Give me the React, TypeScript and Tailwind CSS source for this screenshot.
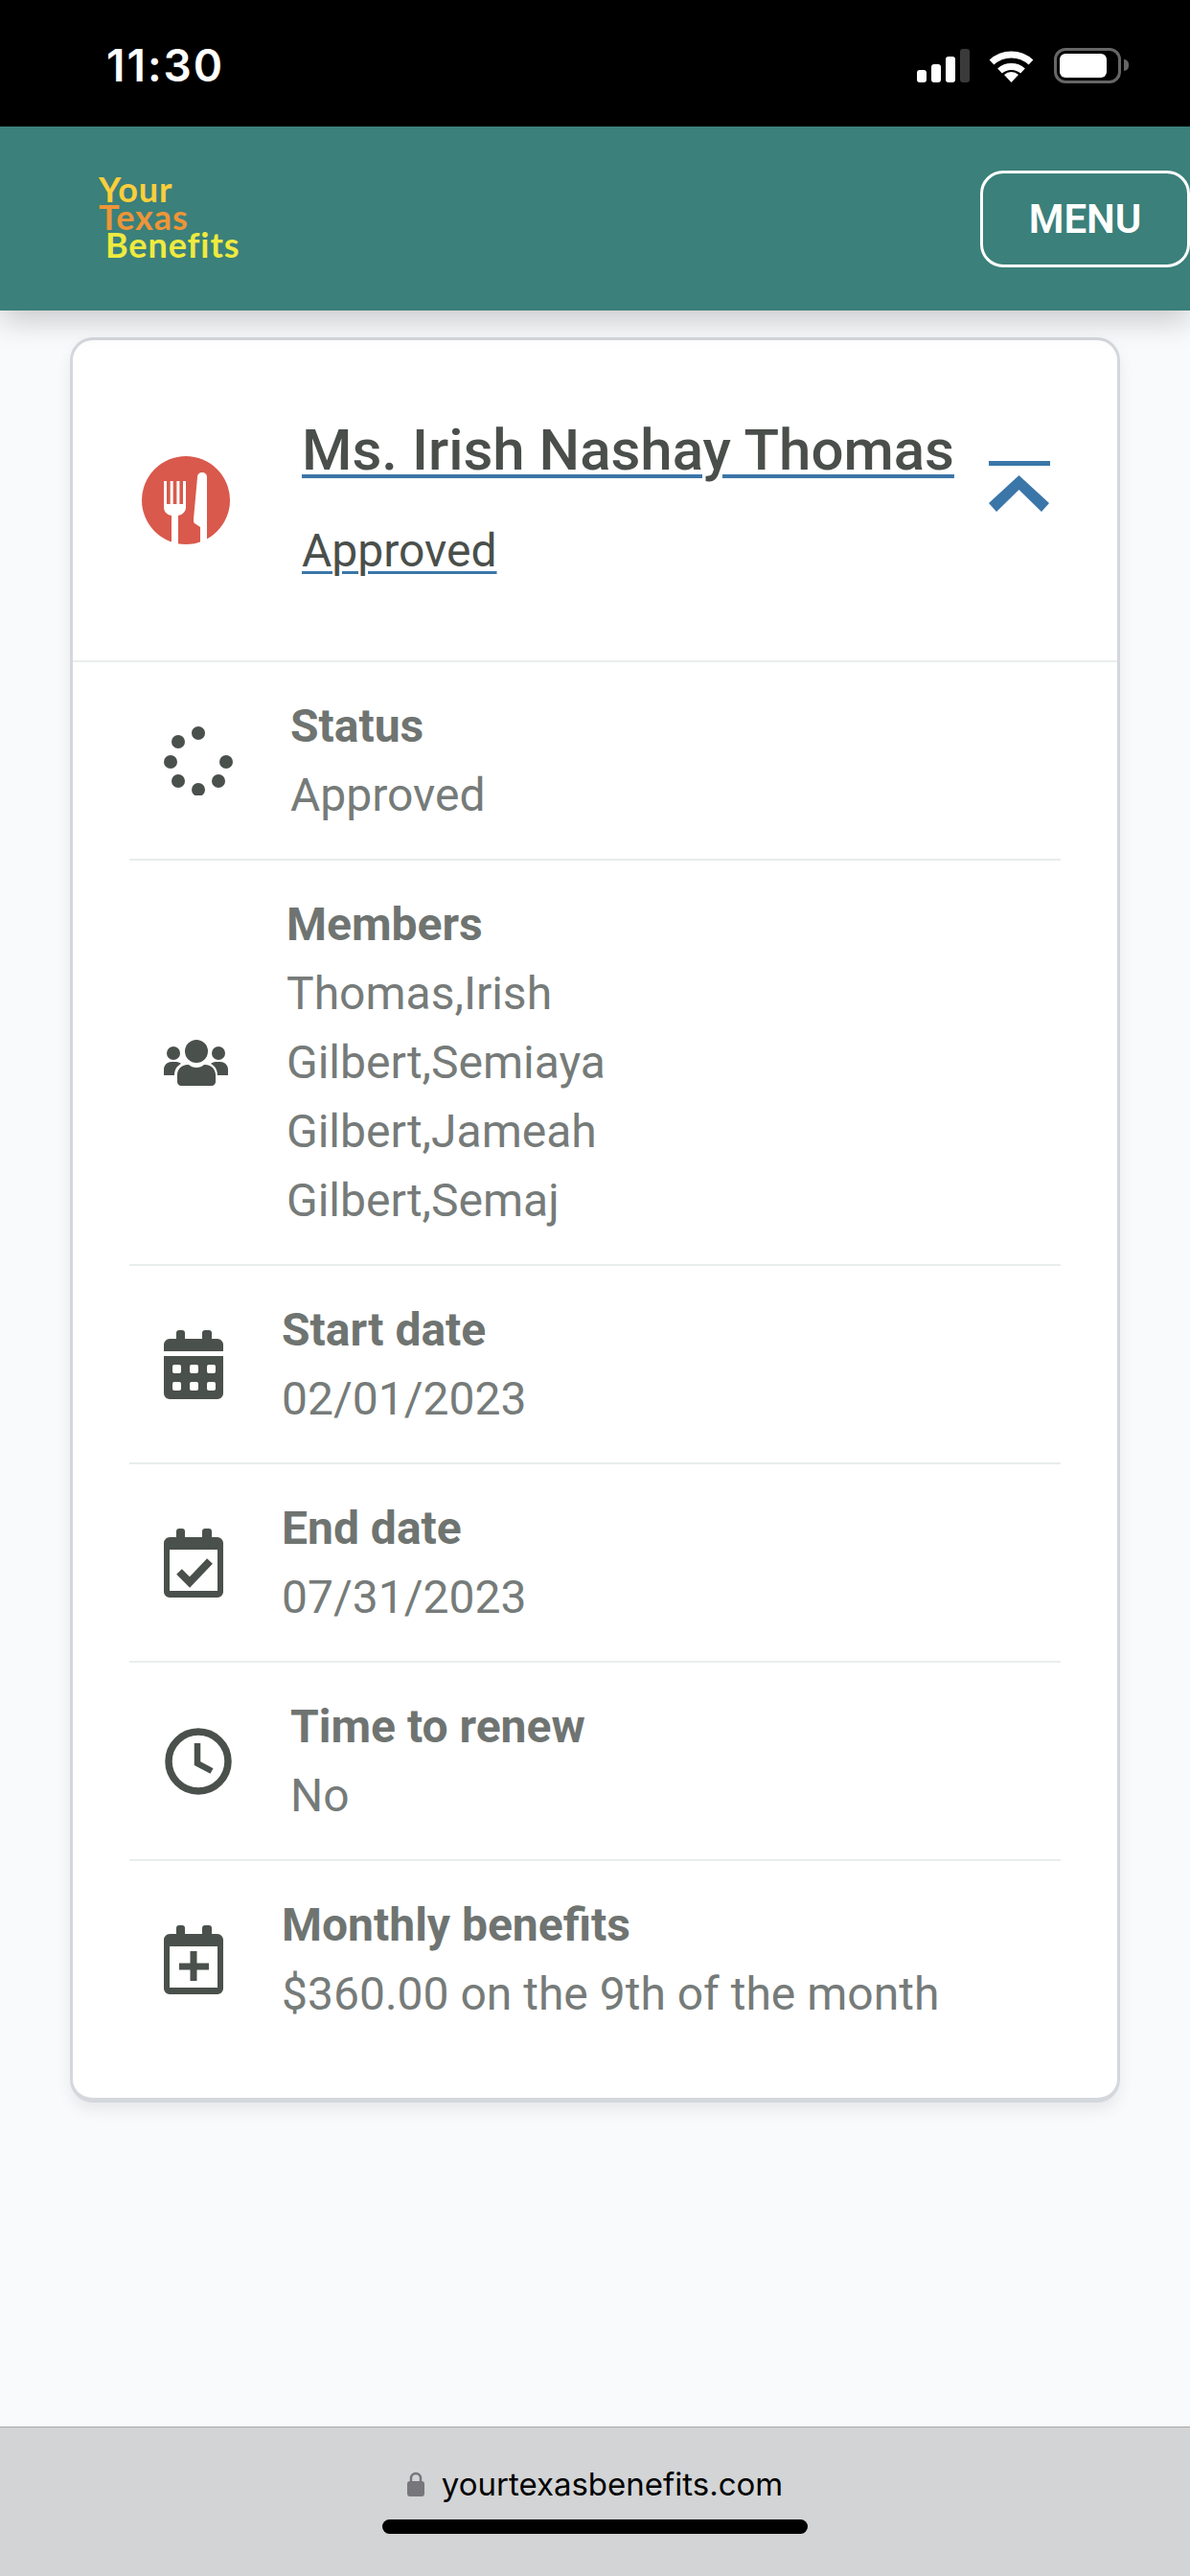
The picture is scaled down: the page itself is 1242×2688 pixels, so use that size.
import React from 'react'

const ICON = '#4a504b'

function StatusIcon() {
  const dots = [
    [36, 7],
    [15, 16],
    [7, 37],
    [15, 57],
    [36, 66],
    [57, 57],
    [65, 37],
  ]
  return (
    <svg width="72" height="72" viewBox="0 0 72 72" className="shrink-0">
      {dots.map(([cx, cy]) => (
        <circle key={`${cx}-${cy}`} cx={cx} cy={cy} r="7" fill={ICON} />
      ))}
    </svg>
  )
}

function MembersIcon() {
  return (
    <svg width="68" height="48" viewBox="0 0 68 48" className="shrink-0">
      <circle cx="34" cy="12" r="12" fill={ICON} />
      <circle cx="10" cy="14" r="7" fill={ICON} />
      <circle cx="57" cy="14" r="7" fill={ICON} />
      <path d="M0 37V31c0-4 3-8 8-8h5c2 0 4 1 5 2-4 2-7 6-7 12z" fill={ICON} />
      <path d="M67 37V31c0-4-3-8-8-8h-5c-2 0-4 1-5 2 4 2 7 6 7 12z" fill={ICON} />
      <path d="M14 44V37c0-6 4-11 11-11h1c2 2 5 3 8 3s6-1 8-3h1c7 0 11 5 11 11v7c0 2-2 4-4 4H18c-2 0-4-2-4-4z" fill={ICON} />
    </svg>
  )
}

function CalendarPegs() {
  return (
    <>
      <rect x="13" y="0" width="9" height="16" rx="3" fill={ICON} />
      <rect x="40" y="0" width="10" height="16" rx="3" fill={ICON} />
    </>
  )
}

function CalendarIcon() {
  const xs = [9, 27, 45]
  const ys = [36, 54]
  return (
    <svg width="63" height="72" viewBox="0 0 63 72" className="shrink-0">
      <CalendarPegs />
      <path d="M0 22V15c0-3 3-6 6-6h50c3 0 6 3 6 6v7z" fill={ICON} />
      <path d="M0 27h62v39c0 3-3 6-6 6H6c-3 0-6-3-6-6z" fill={ICON} />
      {ys.map(y =>
        xs.map(x => <rect key={`${x}-${y}`} x={x} y={y} width="9" height="9" rx="2" fill="#fff" />),
      )}
    </svg>
  )
}

function CalendarFrame({ children }: { children: React.ReactNode }) {
  return (
    <svg width="63" height="72" viewBox="0 0 63 72" className="shrink-0">
      <CalendarPegs />
      <path
        fillRule="evenodd"
        d="M6 9h50c3 0 6 3 6 6v51c0 3-3 6-6 6H6c-3 0-6-3-6-6V15c0-3 3-6 6-6zM6 22v43h50V22z"
        fill={ICON}
      />
      {children}
    </svg>
  )
}

function ClockIcon() {
  return (
    <svg width="72" height="72" viewBox="0 0 72 72" className="shrink-0">
      <circle cx="36" cy="36" r="31" fill="none" stroke={ICON} strokeWidth="7.5" />
      <path d="M35 17v21l15 8" fill="none" stroke={ICON} strokeWidth="6.5" />
    </svg>
  )
}

function MealIcon() {
  return (
    <svg width="92" height="92" viewBox="0 0 92 92" className="shrink-0">
      <circle cx="46" cy="46" r="46" fill="#d9594c" />
      <path
        d="M23 26h3v24h3.7V26h3v24h3.7V26h3v24h3.6V26h3v27c0 5-3.500 8-8 9v30h-7V62c-5-1-8-4-8-9z"
        fill="#fff"
      />
      <path d="M63 17c3 0 5 2 5 5v70h-7V74l-6-4c-1-1-1-2-1-4l4-44c0-3 2-5 5-5z" fill="#fff" />
    </svg>
  )
}

function Row({
  icon,
  label,
  values,
  last,
}: {
  icon: React.ReactNode
  label: string
  values: string[]
  last?: boolean
}) {
  return (
    <div className={`flex items-center pl-[36px] pt-[31px] pb-[30px] ${last ? '' : 'border-b-2 border-[#e8eeec]'}`}>
      {icon}
      <div className="ml-[60px] text-[48px] leading-[72px] text-[#767b79]">
        <div className="font-bold text-[#6f7471]">{label}</div>
        {values.map(v => (
          <div key={v}>{v}</div>
        ))}
      </div>
    </div>
  )
}

export default function App() {
  return (
    <div className="flex min-h-[2688px] w-[1242px] flex-col overflow-hidden bg-[#f9fafc] font-['Roboto',sans-serif]">
      <div className="flex h-[132px] items-center justify-between bg-black pt-[4px] pl-[111px] pr-[64px]">
        <span className="font-['Inter',sans-serif] text-[46px] font-semibold leading-none tracking-[2px] text-white">11:30</span>
        <div className="flex items-center">
          <svg width="55" height="35" viewBox="0 0 55 35">
            <rect x="0" y="22" width="10" height="13" rx="3" fill="#fff" />
            <rect x="15" y="16" width="10" height="19" rx="3" fill="#fff" />
            <rect x="30" y="8" width="10" height="27" rx="3" fill="#fff" />
            <rect x="45" y="0" width="10" height="35" rx="3" fill="#3a3a3a" />
          </svg>
          <svg width="47" height="35" viewBox="0 0 47 35" className="ml-[20px]">
            <path d="M3 14A30 30 0 0 1 44 14" fill="none" stroke="#fff" strokeWidth="7" />
            <path d="M11.500 23A18 18 0 0 1 35.500 23" fill="none" stroke="#fff" strokeWidth="7" />
            <path d="M23.500 35L16 27A11 11 0 0 1 31 27Z" fill="#fff" />
          </svg>
          <div className="ml-[21px] flex items-center">
            <div className="h-[37px] w-[70px] rounded-[12px] border-[3px] border-[#666666] p-[3px]">
              <div className="h-full w-[49px] rounded-[6px] bg-white" />
            </div>
            <div className="ml-[3px] h-[12px] w-[5px] rounded-r-full bg-[#666666]" />
          </div>
        </div>
      </div>

      <header className="relative z-10 flex h-[192px] items-center justify-between bg-[#3b807a] pl-[103px] shadow-[0_10px_30px_rgba(0,0,0,0.2)]">
        <div className="mb-[4px] font-['Lato',sans-serif] text-[36px] font-bold leading-[29px] tracking-[0.9px]">
          <div className="text-[#fcce3a]">Your</div>
          <div className="text-[#ee9537]">Texas</div>
          <div className="pl-[7px] text-[#eeea3f]">Benefits</div>
        </div>
        <button
          type="button"
          className="flex h-[101px] w-[219px] items-center justify-center rounded-[24px] border-[3px] border-white text-[42px] font-semibold text-white"
        >
          MENU
        </button>
      </header>

      <main className="flex-1 pt-[28px]">
        <div className="mx-[73px] w-[1096px] rounded-[24px] border-[3px] border-b-[5px] border-[#d4d8dc] bg-white pb-[42px] shadow-[0_8px_14px_rgba(80,90,90,0.1)]">
          <div className="flex h-[336px] items-center border-b-2 border-[#e8eeec] pl-[72px]">
            <MealIcon />
            <div className="ml-[75px] w-[717px] text-[#4a4f4b]">
              <div className="text-[60px] font-medium leading-[70px] underline decoration-[#3b76a8] decoration-[4px] underline-offset-[5px]">
                Ms. Irish Nashay Thomas
              </div>
              <div className="mt-[35px] text-[48px] leading-[70px] underline decoration-[#3b76a8] decoration-[3px] underline-offset-[5px]">
                Approved
              </div>
            </div>
            <svg width="64" height="54" viewBox="0 0 64 54" className="mb-[28px]">
              <rect x="0" y="0" width="64" height="5" fill="#3b76a8" />
              <path d="M31.500 15L63 44l-8 9-23.500-23L8 53l-8-9z" fill="#3b76a8" />
            </svg>
          </div>

          <div className="mx-[59px]">
            <Row icon={<StatusIcon />} label="Status" values={['Approved']} />
            <Row
              icon={<MembersIcon />}
              label="Members"
              values={['Thomas,Irish', 'Gilbert,Semiaya', 'Gilbert,Jameah', 'Gilbert,Semaj']}
            />
            <Row icon={<CalendarIcon />} label="Start date" values={['02/01/2023']} />
            <Row
              icon={
                <CalendarFrame>
                  <path d="M16 45l11 11 21-22" fill="none" stroke={ICON} strokeWidth="8" />
                </CalendarFrame>
              }
              label="End date"
              values={['07/31/2023']}
            />
            <Row icon={<ClockIcon />} label="Time to renew" values={['No']} />
            <Row
              last
              icon={
                <CalendarFrame>
                  <path d="M16 43h31M31 27v31" fill="none" stroke={ICON} strokeWidth="7" />
                </CalendarFrame>
              }
              label="Monthly benefits"
              values={['$360.00 on the 9th of the month']}
            />
          </div>
        </div>
      </main>

      <footer className="flex h-[156px] flex-col items-center border-t border-[#a9a9a9] bg-[#d3d4d6] pt-[38px]">
        <div className="flex h-[42px] items-center">
          <svg width="18" height="26" viewBox="0 0 18 26">
            <path d="M4 12V7a5 5 0 0 1 10 0v5" fill="none" stroke="#77777b" strokeWidth="2.500" />
            <rect x="0" y="10" width="18" height="16" rx="3" fill="#77777b" />
          </svg>
          <span className="ml-[18px] font-['Inter',sans-serif] text-[33px] leading-none text-black">
            yourtexasbenefits.com
          </span>
        </div>
        <div className="mt-[16px] h-[15px] w-[444px] rounded-full bg-black" />
      </footer>
    </div>
  )
}
